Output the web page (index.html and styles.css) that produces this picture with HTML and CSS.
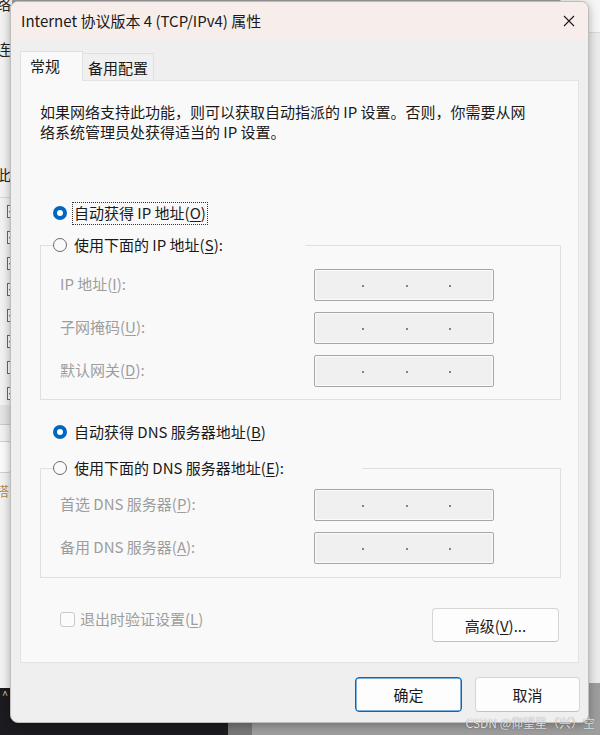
FILE: index.html
```html
<!DOCTYPE html>
<html lang="zh-CN">
<head>
    <meta charset="UTF-8">
    <meta name="viewport" content="width=device-width, initial-scale=1.0">
    <title>Internet 协议版本 4 (TCP/IPv4) 属性</title>
    <link rel="stylesheet" href="styles.css">
</head>
<body>

<div class="desktop">

    <!-- 后面的窗口（只露出一条边） -->
    <div class="bg-window left-window">
        <div class="edge-col">
            <span class="edge-char top-char">络</span>
            <span class="edge-char char-lian">连</span>
            <span class="edge-char char-ci">此</span>
            <div class="edge-line"></div>
            <div class="edge-checks">
                <i class="edge-check on"></i>
                <i class="edge-check on"></i>
                <i class="edge-check on"></i>
                <i class="edge-check on"></i>
                <i class="edge-check on"></i>
                <i class="edge-check on"></i>
                <i class="edge-check"></i>
                <i class="edge-check on"></i>
            </div>
            <div class="edge-band"></div>
            <div class="edge-box"></div>
            <span class="edge-char char-da">搭</span>
        </div>
    </div>
    <div class="bg-window right-window">
        <div class="right-top"></div>
    </div>
    <div class="dark-area"><span class="caret">^</span></div>
    <div class="mid-bar"></div>

    <div class="dialog">
        <div class="titlebar">
            <span class="title">Internet 协议版本 4 (TCP/IPv4) 属性</span>
            <button class="close" aria-label="关闭">
                <svg width="12" height="12" viewBox="0 0 12 12">
                    <path d="M1 1 L11 11 M11 1 L1 11" stroke="#1a1a1a" stroke-width="1.1" fill="none"/>
                </svg>
            </button>
        </div>

        <div class="dialog-body">
            <div class="tabs">
                <div class="tab active">常规</div>
                <div class="tab">备用配置</div>
            </div>

            <div class="panel">
                <p class="desc">如果网络支持此功能，则可以获取自动指派的 IP 设置。否则，你需要从网<br>络系统管理员处获得适当的 IP 设置。</p>

                <label class="radio-row">
                    <span class="radio checked"></span>
                    <span class="radio-text focus">自动获得 IP 地址(<u>O</u>)</span>
                </label>

                <fieldset class="group">
                    <legend class="legend-ip">
                        <label class="radio-row">
                            <span class="radio"></span>
                            <span class="radio-text">使用下面的 IP 地址(<u>S</u>):</span>
                        </label>
                    </legend>
                    <div class="field">
                        <span class="field-label">IP 地址(<u>I</u>):</span>
                        <div class="ipbox"><i></i><i></i><i></i></div>
                    </div>
                    <div class="field">
                        <span class="field-label">子网掩码(<u>U</u>):</span>
                        <div class="ipbox"><i></i><i></i><i></i></div>
                    </div>
                    <div class="field">
                        <span class="field-label">默认网关(<u>D</u>):</span>
                        <div class="ipbox"><i></i><i></i><i></i></div>
                    </div>
                </fieldset>

                <label class="radio-row dns-auto">
                    <span class="radio checked"></span>
                    <span class="radio-text">自动获得 DNS 服务器地址(<u>B</u>)</span>
                </label>

                <fieldset class="group group-dns">
                    <legend class="legend-dns">
                        <label class="radio-row">
                            <span class="radio"></span>
                            <span class="radio-text">使用下面的 DNS 服务器地址(<u>E</u>):</span>
                        </label>
                    </legend>
                    <div class="field">
                        <span class="field-label">首选 DNS 服务器(<u>P</u>):</span>
                        <div class="ipbox"><i></i><i></i><i></i></div>
                    </div>
                    <div class="field">
                        <span class="field-label">备用 DNS 服务器(<u>A</u>):</span>
                        <div class="ipbox"><i></i><i></i><i></i></div>
                    </div>
                </fieldset>

                <div class="bottom-row">
                    <label class="check-row">
                        <span class="checkbox"></span>
                        <span>退出时验证设置(<u>L</u>)</span>
                    </label>
                    <button class="btn btn-adv">高级(<u>V</u>)...</button>
                </div>
            </div>

            <div class="footer">
                <button class="btn btn-ok">确定</button>
                <button class="btn btn-cancel">取消</button>
            </div>
        </div>
    </div>

    <div class="watermark">CSDN @仰望星（兴）空</div>
</div>

</body>
</html>
```

FILE: styles.css
```css
* {
    box-sizing: border-box;
}

body {
    margin: 0;
    font-family: "Noto Sans CJK SC", "Noto Sans", sans-serif;
    font-size: 15px;
    color: #1a1a1a;
}

.desktop {
    position: relative;
    width: 600px;
    height: 735px;
    overflow: hidden;
    background-color: #9d9d9d;
}

/* 背景窗口 */
.bg-window {
    position: absolute;
}

.left-window {
    left: -290px;
    top: -6px;
    width: 302px;
    height: 694px;
    background-color: #f2f2f2;
}

.edge-col {
    display: flex;
    flex-direction: column;
    padding-left: 286px;
    color: #222;
    line-height: 20px;
}

.edge-char {
    display: block;
    height: 20px;
}

.char-lian {
    margin-top: 25px;
}

.char-ci {
    margin-top: 106px;
}

.edge-line {
    height: 1px;
    margin-top: 12px;
    background-color: #d6d6d6;
}

.edge-checks {
    display: flex;
    flex-direction: column;
    gap: 13px;
    margin-top: 7px;
    padding-left: 11px;
}

.edge-check {
    display: block;
    width: 13px;
    height: 13px;
    border: 1px solid #6a6a6a;
    background-color: #fff;
    position: relative;
}

.edge-check.on::after {
    content: "";
    position: absolute;
    left: 2px;
    top: 2px;
    width: 6px;
    height: 4px;
    border-left: 2px solid #333;
    border-bottom: 2px solid #333;
    transform: rotate(-45deg);
}

.edge-band {
    height: 20px;
    margin-top: 5px;
    background-color: #e4e4e4;
    border-bottom: 1px solid #c9c9c9;
}

.edge-box {
    height: 32px;
    margin-top: 16px;
    border: 1px solid #cfcfcf;
    border-radius: 4px;
    background-color: #fbfbfb;
}

.char-da {
    margin-top: 8px;
    color: #b88a3a;
    font-size: 13px;
}

.right-window {
    left: 560px;
    top: -2px;
    width: 60px;
    height: 685px;
    background-color: #ebebeb;
    border-left: 1px solid #d0d0d0;
}

.right-top {
    height: 35px;
    background-color: #f6f6f6;
    border-bottom: 1px solid #dadada;
}

.dark-area {
    position: absolute;
    left: 0;
    top: 688px;
    width: 228px;
    height: 50px;
    background-color: #1b1b20;
}

.caret {
    display: block;
    padding-left: 2px;
    color: #d9c7a8;
    font-size: 11px;
    line-height: 12px;
}

.mid-bar {
    position: absolute;
    left: 228px;
    top: 700px;
    width: 24px;
    height: 40px;
    background-color: #767676;
}

/* 对话框 */
.dialog {
    position: absolute;
    left: 10px;
    top: 1px;
    width: 579px;
    border: 1px solid #bdbdbd;
    border-radius: 8px;
    overflow: hidden;
    background-color: #efefef;
    box-shadow: 0 2px 10px rgba(0, 0, 0, 0.3);
}

.titlebar {
    display: flex;
    align-items: center;
    justify-content: space-between;
    height: 37px;
    padding-left: 10px;
    background-color: #f7eeeb;
}

.title {
    font-size: 15px;
    color: #1a1a1a;
}

.close {
    width: 38px;
    height: 37px;
    display: flex;
    align-items: center;
    justify-content: center;
    border: none;
    background: none;
    padding: 0;
}

.dialog-body {
    padding: 12px 9px 10px 9px;
}

.tabs {
    display: flex;
    align-items: flex-end;
    height: 30px;
    margin-bottom: -1px;
    position: relative;
    z-index: 1;
}

.tab {
    height: 27px;
    width: 71px;
    padding-left: 5px;
    line-height: 27px;
    background-color: #f0f0f0;
    border: 1px solid #e0e0e0;
    border-bottom: none;
    border-left: none;
    margin-bottom: 1px;
}

.tab.active {
    height: 30px;
    width: 63px;
    padding-left: 9px;
    line-height: 27px;
    margin-bottom: 0;
    background-color: #f9f9f9;
    border-left: 1px solid #e0e0e0;
}

.panel {
    height: 583px;
    padding: 21px 0 0 19px;
    background-color: #f9f9f9;
    border: 1px solid #e3e3e3;
}

.desc {
    margin: 0;
    line-height: 20px;
    white-space: nowrap;
}

.radio-row {
    display: flex;
    align-items: center;
    gap: 5px;
    height: 24px;
    margin: 59px 0 0 13px;
}

.radio {
    flex: none;
    width: 14px;
    height: 14px;
    border: 1px solid #6a6a6a;
    border-radius: 50%;
    background-color: #fafafa;
}

.radio.checked {
    border: 4px solid #0067c0;
    background-color: #fff;
}

.radio-text {
    display: inline-block;
    height: 23px;
    line-height: 20px;
    padding: 0 1px;
    border: 1px solid transparent;
    white-space: nowrap;
}

.radio-text.focus {
    border: 1px dotted #333;
}

u {
    text-decoration: underline;
    text-underline-offset: 2px;
}

.group {
    width: 521px;
    margin: 9px 0 0 0;
    padding: 13px 0 12px 0;
    border: 1px solid #e0e0e0;
    display: flex;
    flex-direction: column;
    gap: 11px;
}

.group legend {
    padding: 0;
    margin-left: 12px;
    height: 22px;
    background-color: #f9f9f9;
}

.group legend .radio-row {
    margin: 0;
    height: 22px;
}

.legend-ip {
    width: 252px;
}

.legend-dns {
    width: 309px;
}

.dns-auto {
    margin-top: 20px;
}

.group-dns {
    margin-top: 13px;
    padding-top: 10px;
    padding-bottom: 13px;
}

.field {
    display: flex;
    align-items: center;
    height: 32px;
    padding-left: 19px;
}

.field-label {
    width: 254px;
    color: #9d9d9d;
    line-height: 20px;
    margin-top: -3px;
}

.ipbox {
    display: flex;
    align-items: center;
    gap: 41.5px;
    width: 180px;
    height: 32px;
    padding-left: 47px;
    background-color: #f0f0f0;
    border: 1px solid #a6a6a6;
    border-radius: 2px;
    box-shadow: inset 0 0 0 1px #fbfbfb;
}

.ipbox i {
    display: block;
    width: 2px;
    height: 2px;
    margin-top: 2px;
    background-color: #76869a;
}

.bottom-row {
    display: flex;
    justify-content: space-between;
    align-items: flex-start;
    width: 519px;
    margin-top: 30px;
    padding-left: 20px;
}

.check-row {
    display: flex;
    align-items: center;
    gap: 5px;
    height: 22px;
    color: #9d9d9d;
    line-height: 20px;
}

.checkbox {
    width: 15px;
    height: 15px;
    border: 1px solid #c9c9c9;
    border-radius: 3px;
    background-color: #fbfbfb;
}

.btn {
    font-family: "Noto Sans CJK SC", "Noto Sans", sans-serif;
    font-size: 15px;
    color: #1a1a1a;
    background-color: #fdfdfd;
    border: 1px solid #d6d6d6;
    border-bottom-color: #c2c2c2;
    border-radius: 4px;
    padding: 0;
}

.btn-adv {
    width: 127px;
    height: 34px;
}

.footer {
    display: flex;
    justify-content: flex-end;
    gap: 13px;
    margin-top: 14px;
    margin-right: -1px;
}

.btn-ok {
    width: 107px;
    height: 35px;
    border: 1px solid #0067c0;
    box-shadow: inset 0 0 0 0.5px #0067c0;
}

.btn-cancel {
    width: 105px;
    height: 35px;
}

.watermark {
    position: absolute;
    right: 5px;
    top: 715px;
    font-size: 12px;
    line-height: 15px;
    color: rgba(255, 255, 255, 0.85);
    text-shadow: 0 0 1px rgba(0, 0, 0, 0.5);
}
```
